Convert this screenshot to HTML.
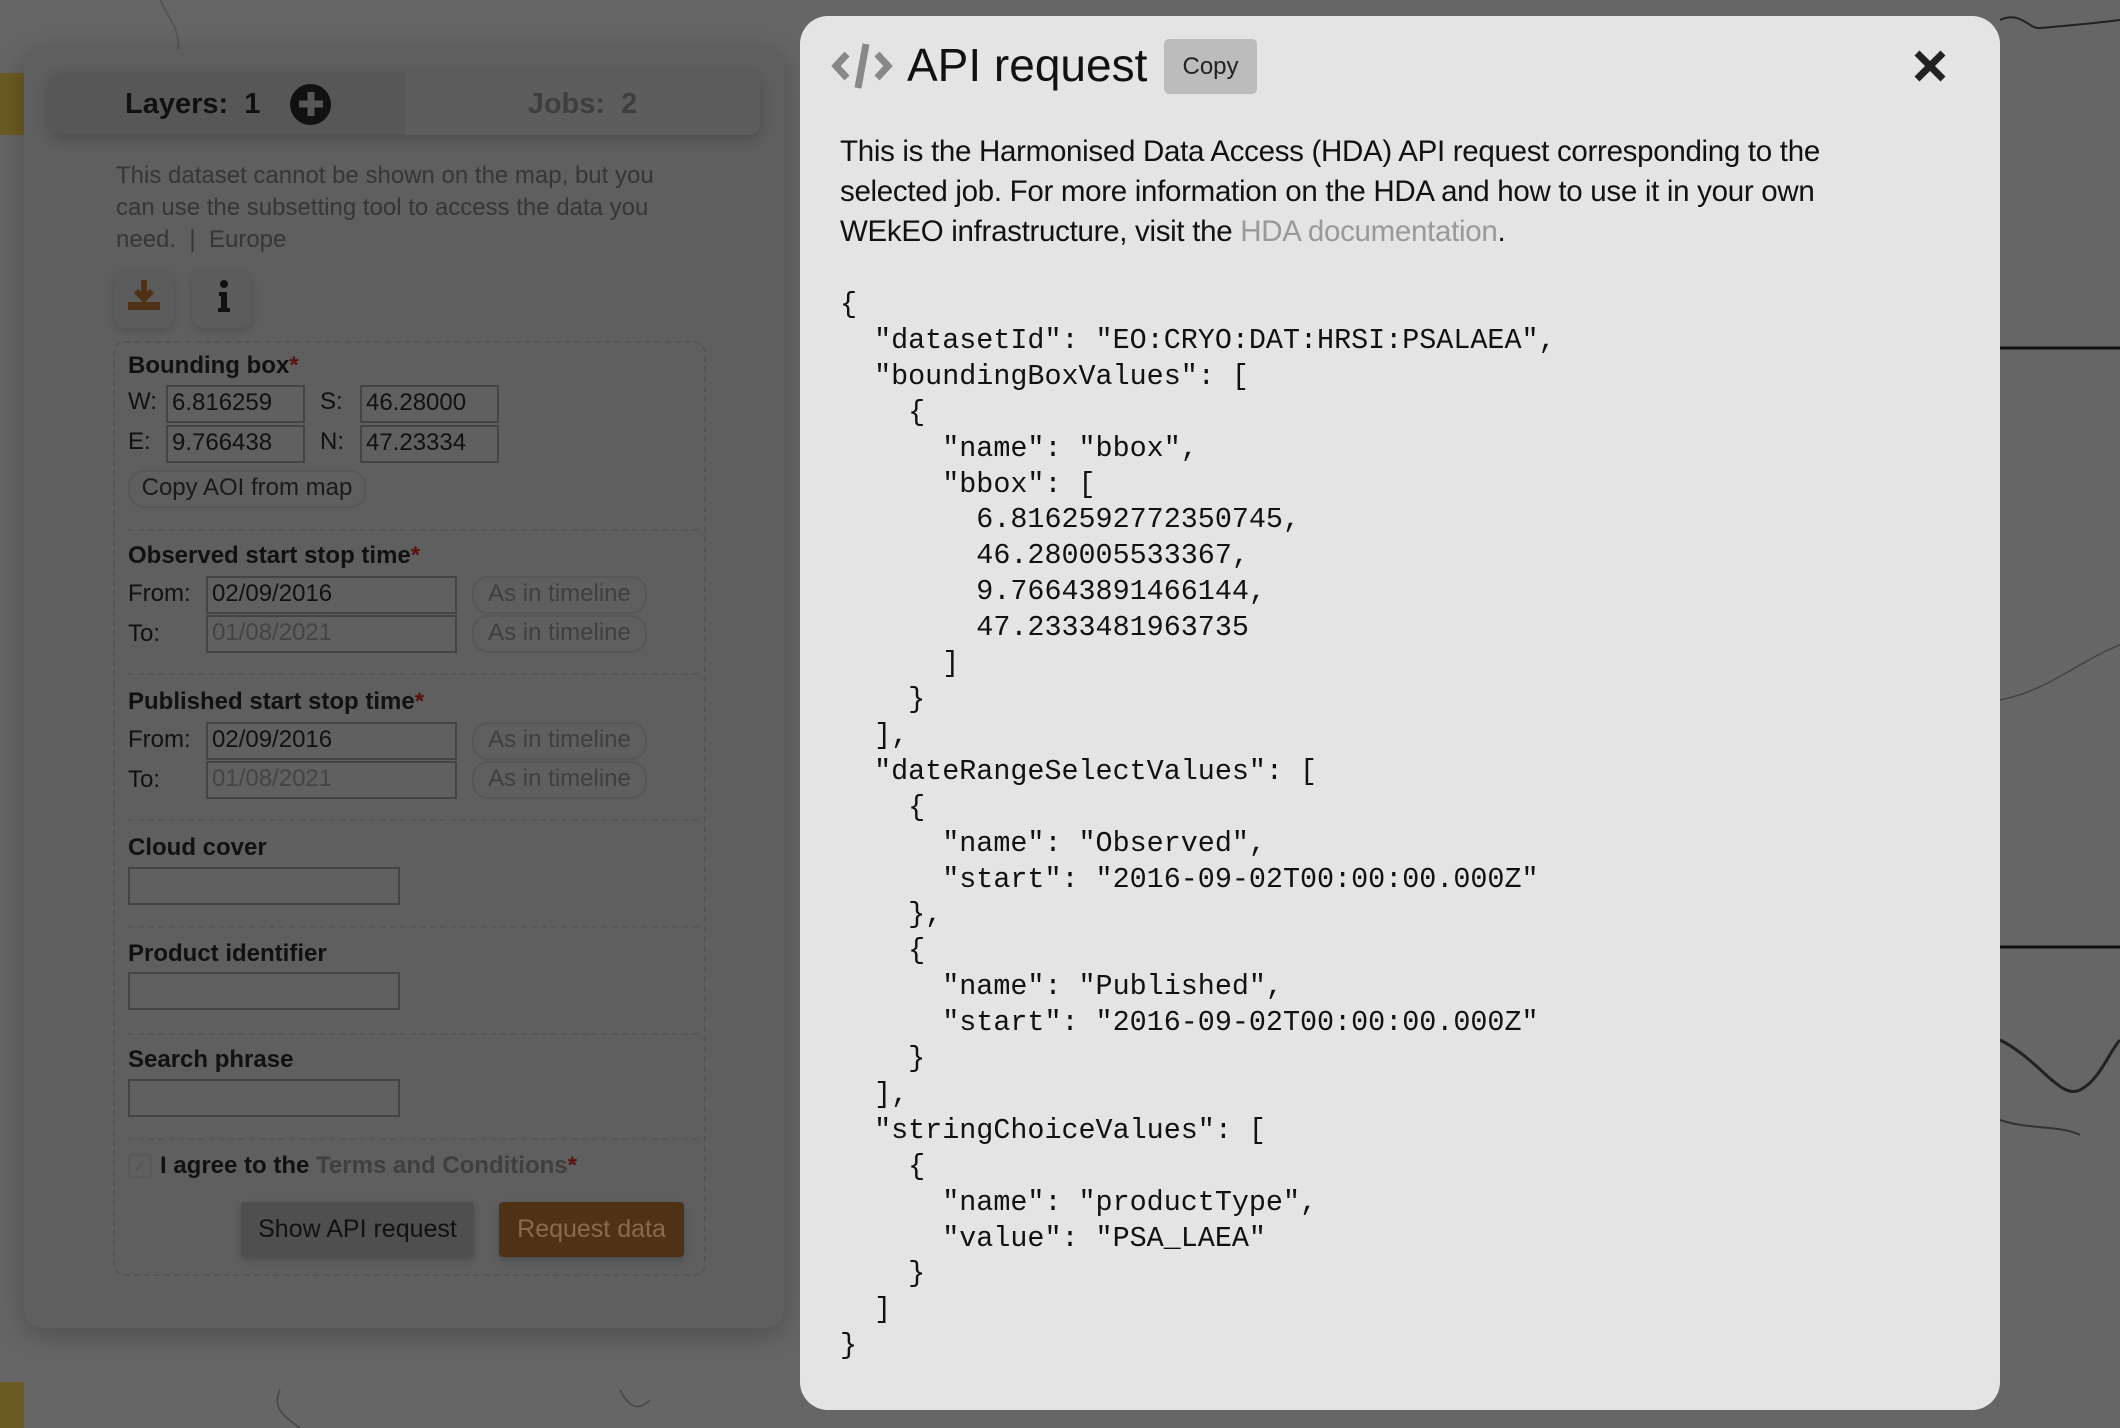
<!DOCTYPE html>
<html><head><meta charset="utf-8"><style>
*{box-sizing:border-box;margin:0;padding:0}
body{width:2120px;height:1428px;overflow:hidden;background:#666;font-family:"Liberation Sans",sans-serif;position:relative}
.abs{position:absolute}
.panel{left:24px;top:49px;width:760px;height:1279px;background:#5f5f5f;border-radius:18px;box-shadow:0 6px 30px rgba(0,0,0,.25)}
.tabs{left:49px;top:73px;width:711px;height:62px;border-radius:12px;overflow:hidden;box-shadow:0 4px 14px rgba(0,0,0,.2);display:flex}
.tab1{width:356px;background:#575757;color:#111;font-weight:bold;font-size:29px;display:flex;align-items:center;padding-left:76px}
.tab2{flex:1;background:#5d5d5d;color:#3e3e3e;font-weight:bold;font-size:29px;display:flex;align-items:center;justify-content:center}
.plus{display:inline-block;width:41px;height:41px;border-radius:50%;background:#111;margin-left:30px;position:relative}
.plus:before,.plus:after{content:"";position:absolute;background:#575757;left:50%;top:50%;transform:translate(-50%,-50%)}
.plus:before{width:24px;height:7px}.plus:after{width:7px;height:24px}
.desc{left:116px;top:160px;width:580px;font-size:24px;line-height:32px;color:#363636}
.ib{width:60px;height:58px;border-radius:12px;background:#5c5c5c;box-shadow:0 3px 8px rgba(0,0,0,.15)}
.box{left:113px;top:341px;width:593px;height:935px;border:2px dashed #555;border-radius:12px}
.lbl{font-weight:bold;font-size:24px;color:#111}
.lbl i{color:#5a1010;font-style:normal}
.t{font-size:24px;color:#111}
.inp{border:2px solid #444;background:#606060;font-size:24px;color:#111;padding-left:4px;line-height:32px}
.pill{border:2px solid #575757;border-radius:16px;font-size:24px;color:#3f3f3f;text-align:center;line-height:32px}
.sep{left:128px;width:570px;border-top:2px dashed #575757}
.modal{left:800px;top:16px;width:1200px;height:1394px;background:#e4e4e4;border-radius:28px}
pre{font-family:"Liberation Mono",monospace;font-size:28.4px;line-height:35.9px;color:#111}
</style></head><body>
<svg class="abs" style="left:0;top:0" width="2120" height="1428">
<path d="M160 0 C170 20 180 30 178 50" stroke="#555" stroke-width="2" fill="none"/>
<path d="M2000 348 H2120 M2000 947 H2120" stroke="#111" stroke-width="3"/>
<path d="M2000 20 C2020 10 2030 30 2040 28 C2060 26 2080 25 2120 20" stroke="#222" stroke-width="2" fill="none"/>
<path d="M2000 1040 C2040 1060 2060 1100 2080 1090 C2100 1080 2110 1050 2120 1040" stroke="#222" stroke-width="3" fill="none"/>
<path d="M2000 1120 C2030 1130 2060 1125 2080 1135" stroke="#333" stroke-width="2" fill="none"/>
<path d="M2000 700 C2050 690 2080 660 2120 645" stroke="#444" stroke-width="1.5" fill="none"/>
<path d="M280 1390 C270 1410 290 1420 300 1428 M620 1390 C630 1410 640 1410 650 1400" stroke="#444" stroke-width="1.5" fill="none"/>
<rect x="0" y="73" width="24" height="62" fill="#6b5a22"/>
<rect x="0" y="1382" width="24" height="46" fill="#6b5a22"/>
</svg>
<div class="abs panel"></div>
<div class="abs tabs"><div class="tab1">Layers:&nbsp; 1<span class="plus"></span></div><div class="tab2">Jobs:&nbsp; 2</div></div>
<div class="abs desc">This dataset cannot be shown on the map, but you can use the subsetting tool to access the data you need. &nbsp;| &nbsp;Europe</div>
<div class="abs ib" style="left:114px;top:270px"><svg width="60" height="58"><path d="M30 10v18M22 21l8 8 8-8" stroke="#4f3216" stroke-width="6" fill="none"/><rect x="14" y="32" width="32" height="8" fill="#4f3216"/></svg></div>
<div class="abs ib" style="left:192px;top:270px"><svg width="60" height="58"><circle cx="32" cy="14" r="4" fill="#111"/><path d="M27 22h8v16h3v4H26v-4h3V26h-2z" fill="#111"/></svg></div>
<div class="abs box"></div>
<div class="abs lbl" style="left:128px;top:352px">Bounding box<i>*</i></div>
<div class="abs t" style="left:128px;top:388px">W:</div><div class="abs inp" style="left:166px;top:385px;width:139px;height:38px">6.816259</div>
<div class="abs t" style="left:320px;top:388px">S:</div><div class="abs inp" style="left:360px;top:385px;width:139px;height:38px">46.28000</div>
<div class="abs t" style="left:128px;top:428px">E:</div><div class="abs inp" style="left:166px;top:425px;width:139px;height:38px">9.766438</div>
<div class="abs t" style="left:320px;top:428px">N:</div><div class="abs inp" style="left:360px;top:425px;width:139px;height:38px">47.23334</div>
<div class="abs pill" style="left:128px;top:470px;width:238px;height:38px;color:#1a1a1a">Copy AOI from map</div>
<div class="abs sep" style="top:529px"></div>
<div class="abs lbl" style="left:128px;top:542px">Observed start stop time<i>*</i></div>
<div class="abs t" style="left:128px;top:580px">From:</div><div class="abs inp" style="left:206px;top:576px;width:251px;height:38px">02/09/2016</div><div class="abs pill" style="left:472px;top:576px;width:175px;height:38px">As in timeline</div>
<div class="abs t" style="left:128px;top:620px">To:</div><div class="abs inp" style="left:206px;top:615px;width:251px;height:38px;color:#444">01/08/2021</div><div class="abs pill" style="left:472px;top:615px;width:175px;height:38px">As in timeline</div>
<div class="abs sep" style="top:673px"></div>
<div class="abs lbl" style="left:128px;top:688px">Published start stop time<i>*</i></div>
<div class="abs t" style="left:128px;top:726px">From:</div><div class="abs inp" style="left:206px;top:722px;width:251px;height:38px">02/09/2016</div><div class="abs pill" style="left:472px;top:722px;width:175px;height:38px">As in timeline</div>
<div class="abs t" style="left:128px;top:766px">To:</div><div class="abs inp" style="left:206px;top:761px;width:251px;height:38px;color:#444">01/08/2021</div><div class="abs pill" style="left:472px;top:761px;width:175px;height:38px">As in timeline</div>
<div class="abs sep" style="top:819px"></div>
<div class="abs lbl" style="left:128px;top:834px">Cloud cover</div><div class="abs inp" style="left:128px;top:867px;width:272px;height:38px"></div>
<div class="abs sep" style="top:926px"></div>
<div class="abs lbl" style="left:128px;top:940px">Product identifier</div><div class="abs inp" style="left:128px;top:972px;width:272px;height:38px"></div>
<div class="abs sep" style="top:1033px"></div>
<div class="abs lbl" style="left:128px;top:1046px">Search phrase</div><div class="abs inp" style="left:128px;top:1079px;width:272px;height:38px"></div>
<div class="abs sep" style="top:1138px"></div>
<div class="abs" style="left:128px;top:1154px;width:24px;height:24px;border:2px solid #595959;border-radius:4px;color:#555;font-size:18px;text-align:center;line-height:20px">✓</div>
<div class="abs lbl" style="left:160px;top:1152px">I agree to the <span style="color:#3f3f3f">Terms and Conditions</span><i>*</i></div>
<div class="abs" style="left:241px;top:1202px;width:233px;height:55px;background:#4f4f4f;border-radius:4px;font-size:25px;color:#111;text-align:center;line-height:55px;box-shadow:0 3px 8px rgba(0,0,0,.2)">Show API request</div>
<div class="abs" style="left:499px;top:1202px;width:185px;height:55px;background:#4f3216;border-radius:4px;font-size:25px;color:#8a6a4a;text-align:center;line-height:55px;box-shadow:0 3px 8px rgba(0,0,0,.2)">Request data</div>

<div class="abs modal"></div>
<svg class="abs" style="left:830px;top:40px" width="64" height="52"><path d="M17 14L6 26l11 12M47 14l11 12-11 12" stroke="#888" stroke-width="7" fill="none"/><path d="M36 4L28 48" stroke="#888" stroke-width="7"/></svg>
<div class="abs" style="left:907px;top:38px;font-size:46px;color:#111">API request</div>
<div class="abs" style="left:1164px;top:39px;width:93px;height:55px;background:#bcbcbc;border-radius:5px;font-size:24px;color:#222;text-align:center;line-height:55px">Copy</div>
<svg class="abs" style="left:1912px;top:48px" width="36" height="36"><path d="M5 5L31 31M31 5L5 31" stroke="#222" stroke-width="7"/></svg>
<div class="abs" style="left:840px;top:132px;width:1025px;font-size:29.5px;line-height:40px;color:#111;letter-spacing:-0.3px">This is the Harmonised Data Access (HDA) API request corresponding to the selected job. For more information on the HDA and how to use it in your own WEkEO infrastructure, visit the <span style="color:#999">HDA documentation</span>.</div>
<pre class="abs" style="left:840px;top:287px">{
  "datasetId": "EO:CRYO:DAT:HRSI:PSALAEA",
  "boundingBoxValues": [
    {
      "name": "bbox",
      "bbox": [
        6.8162592772350745,
        46.280005533367,
        9.76643891466144,
        47.2333481963735
      ]
    }
  ],
  "dateRangeSelectValues": [
    {
      "name": "Observed",
      "start": "2016-09-02T00:00:00.000Z"
    },
    {
      "name": "Published",
      "start": "2016-09-02T00:00:00.000Z"
    }
  ],
  "stringChoiceValues": [
    {
      "name": "productType",
      "value": "PSA_LAEA"
    }
  ]
}</pre>
</body></html>
